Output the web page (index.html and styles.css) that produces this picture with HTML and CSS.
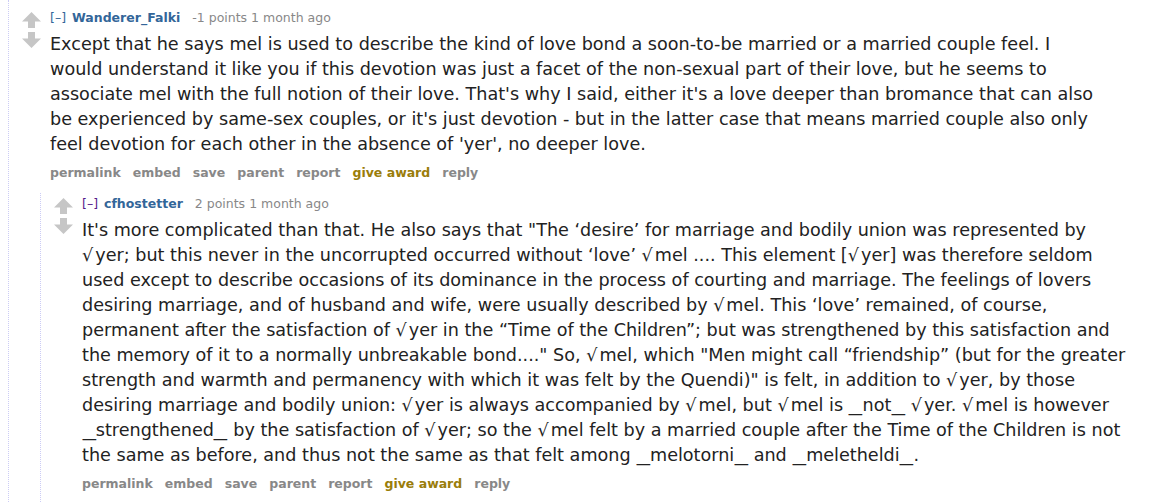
FILE: index.html
```html
<!DOCTYPE html>
<html>
<head>
<meta charset="utf-8">
<link rel="stylesheet" href="styles.css">
</head>
<body>
<div class="thread">
  <div class="comment">
    <div class="midcol">
      <svg class="arrow" viewBox="0 0 19 16" width="19" height="16"><polygon points="9.5,0 19,9.5 13,9.5 13,16 6,16 6,9.5 0,9.5"/></svg>
      <svg class="arrow" viewBox="0 0 19 16" width="19" height="16"><polygon points="6,0 13,0 13,6.5 19,6.5 9.5,16 0,6.5 6,6.5"/></svg>
    </div>
    <div class="entry">
      <p class="tagline"><a class="expand">[–]</a> <a class="author">Wanderer_Falki</a> <span class="score">-1 points</span> <time>1 month ago</time></p>
      <div class="md">Except that he says mel is used to describe the kind of love bond a soon-to-be married or a married couple feel. I would understand it like you if this devotion was just a facet of the non-sexual part of their love, but he seems to associate mel with the full notion of their love. That's why I said, either it's a love deeper than bromance that can also be experienced by same-sex couples, or it's just devotion - but in the latter case that means married couple also only feel devotion for each other in the absence of 'yer', no deeper love.</div>
      <ul class="buttons">
        <li>permalink</li><li>embed</li><li>save</li><li>parent</li><li>report</li><li class="award">give award</li><li>reply</li>
      </ul>
    </div>
  </div>
  <div class="child">
    <div class="comment">
      <div class="midcol">
        <svg class="arrow" viewBox="0 0 19 16" width="19" height="16"><polygon points="9.5,0 19,9.5 13,9.5 13,16 6,16 6,9.5 0,9.5"/></svg>
        <svg class="arrow" viewBox="0 0 19 16" width="19" height="16"><polygon points="6,0 13,0 13,6.5 19,6.5 9.5,16 0,6.5 6,6.5"/></svg>
      </div>
      <div class="entry">
        <p class="tagline"><a class="expand visited">[–]</a> <a class="author">cfhostetter</a> <span class="score">2 points</span> <time>1 month ago</time></p>
        <div class="md">It's more complicated than that. He also says that "The ‘desire’ for marriage and bodily union was represented by<br>
<span class="rt">√</span>yer; but this never in the uncorrupted occurred without ‘love’ <span class="rt">√</span>mel .... This element [<span class="rt">√</span>yer] was therefore seldom<br>
used except to describe occasions of its dominance in the process of courting and marriage. The feelings of lovers<br>
desiring marriage, and of husband and wife, were usually described by <span class="rt">√</span>mel. This ‘love’ remained, of course,<br>
permanent after the satisfaction of <span class="rt">√</span>yer in the “Time of the Children”; but was strengthened by this satisfaction and<br>
the memory of it to a normally unbreakable bond...." So, <span class="rt">√</span>mel, which "Men might call “friendship” (but for the greater<br>
strength and warmth and permanency with which it was felt by the Quendi)" is felt, in addition to <span class="rt">√</span>yer, by those<br>
desiring marriage and bodily union: <span class="rt">√</span>yer is always accompanied by <span class="rt">√</span>mel, but <span class="rt">√</span>mel is <span class="us">_</span>not<span class="us">_</span> <span class="rt">√</span>yer. <span class="rt">√</span>mel is however<br>
<span class="us">_</span>strengthened<span class="us">_</span> by the satisfaction of <span class="rt">√</span>yer; so the <span class="rt">√</span>mel felt by a married couple after the Time of the Children is not<br>
the same as before, and thus not the same as that felt among <span class="us">_</span>melotorni<span class="us">_</span> and <span class="us">_</span>meletheldi<span class="us">_</span>.</div>
        <ul class="buttons">
          <li>permalink</li><li>embed</li><li>save</li><li>parent</li><li>report</li><li class="award">give award</li><li>reply</li>
        </ul>
      </div>
    </div>
  </div>
</div>
</body>
</html>
```

FILE: styles.css
```css
html, body {
  margin: 0;
  padding: 0;
  background: #fff;
}
body {
  font-family: "DejaVu Sans", Verdana, sans-serif;
  padding-left: 8px;
  overflow: hidden;
}
.thread {
  border-left: 1px dotted #ccccf5;
  padding-top: 10px;
  min-height: 100vh;
  box-sizing: border-box;
  display: flex;
  flex-direction: column;
}
.comment {
  display: flex;
  align-items: flex-start;
}
.midcol {
  width: 19px;
  margin-left: 13px;
  margin-right: 9px;
  padding-top: 2px;
  display: flex;
  flex-direction: column;
  gap: 4px;
}
.arrow {
  display: block;
  fill: #c6c6c6;
}
.entry {
  flex: 1;
}
.tagline {
  margin: 0;
  font-size: 12.5px;
  line-height: 16px;
  color: #888;
}
.tagline a {
  text-decoration: none;
}
.expand {
  color: #369;
  margin-right: 2px;
}
.expand.visited {
  color: #551a8b;
}
.author {
  color: #369;
  font-weight: bold;
  margin-right: 8px;
}
.md {
  margin-top: 6px;
  font-size: 17.6px;
  line-height: 25px;
  color: #222;
  max-width: 1050px;
}
.rt {
  padding-right: 2px;
}
.us {
  display: inline-block;
  transform: scaleX(1.5);
  margin: 0 2.5px;
}
.buttons {
  list-style: none;
  margin: 8px 0 0;
  padding: 0;
  display: flex;
  gap: 12px;
  font-size: 12.5px;
  line-height: 16px;
  font-weight: bold;
  color: #888;
}
.buttons .award {
  color: #9a7d0a;
}
.child {
  flex: 1;
  margin-left: 31px;
  margin-top: 12px;
  padding-top: 3px;
  border-left: 1px dotted #ccccf5;
}
```
